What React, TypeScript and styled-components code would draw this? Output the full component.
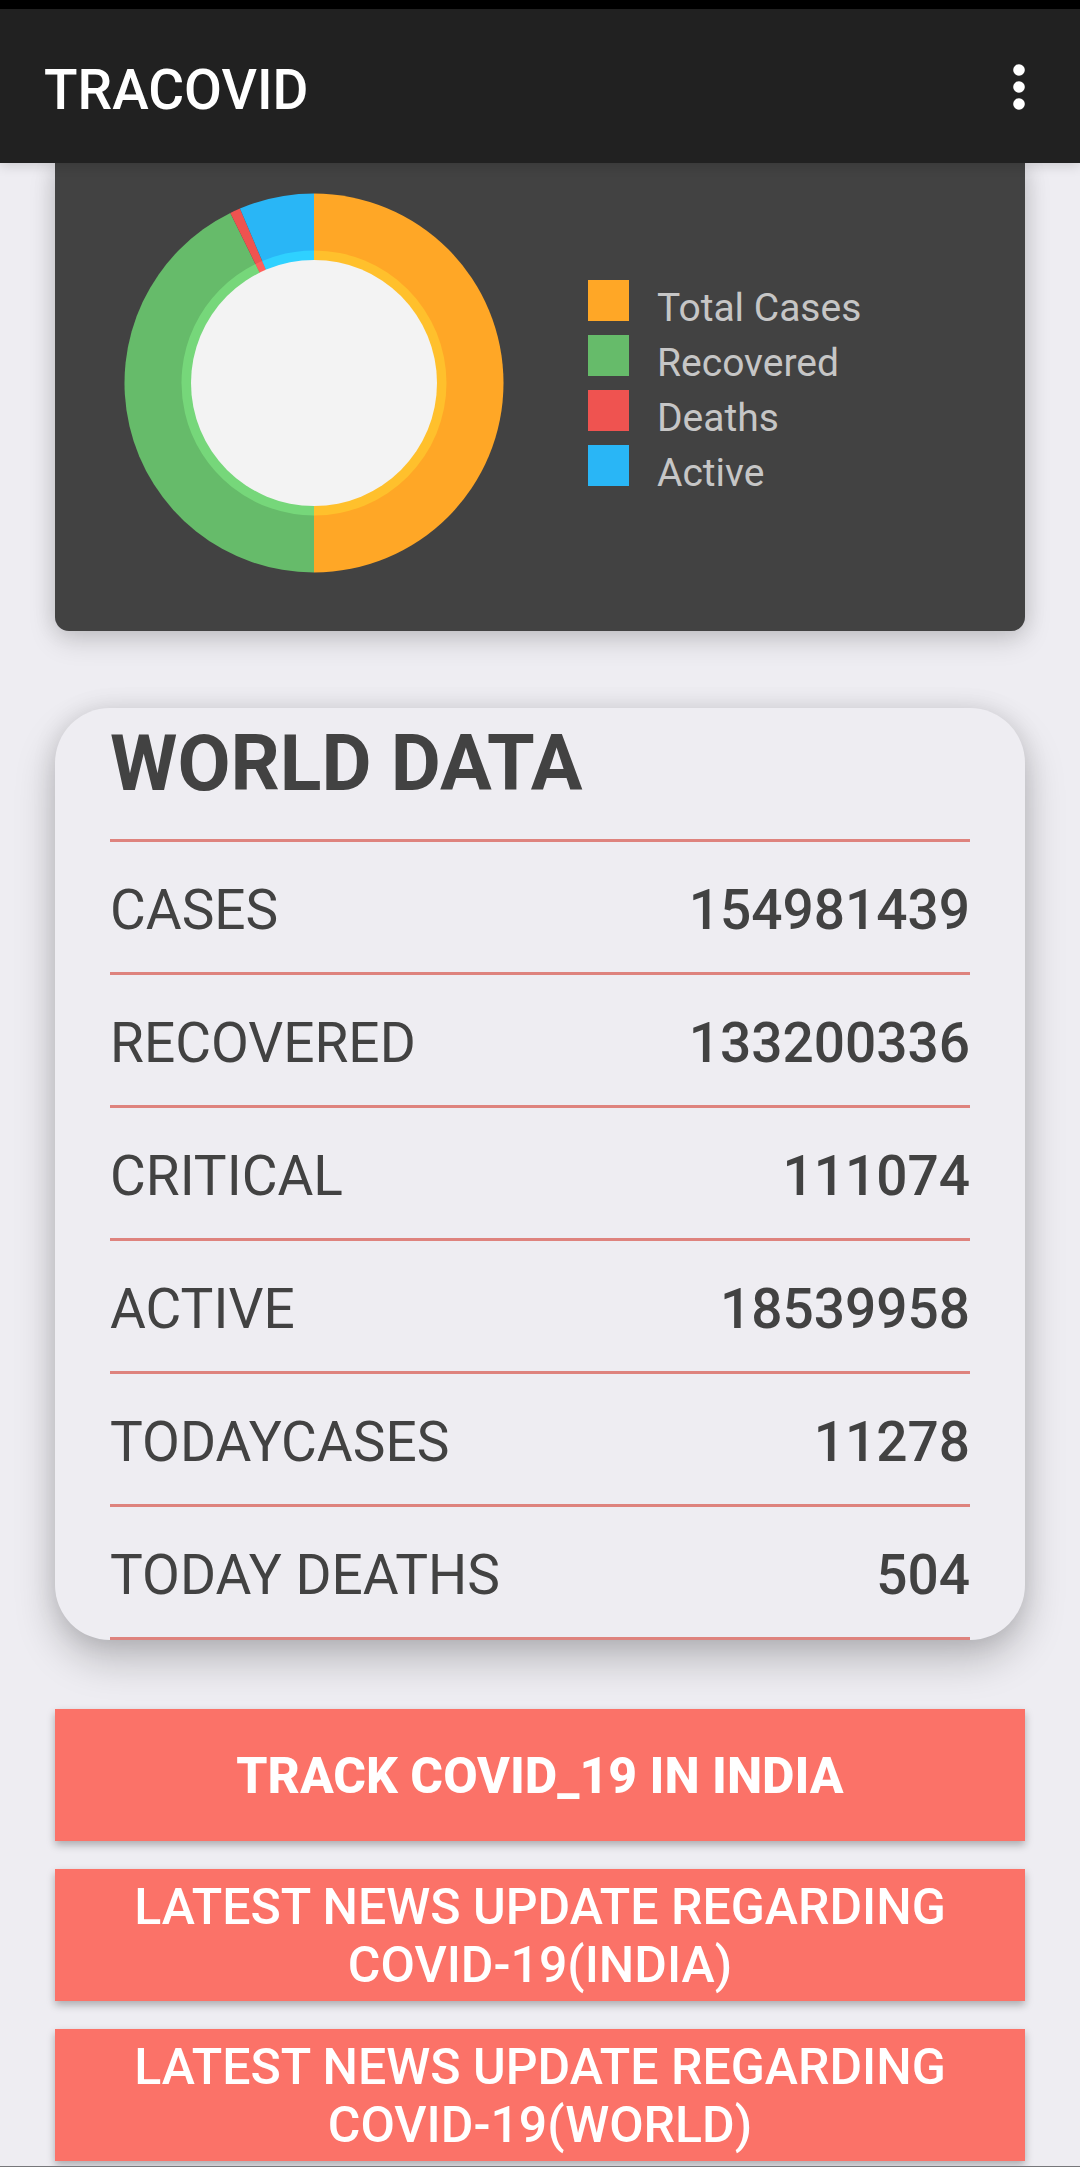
import React from "react";
import styled, { createGlobalStyle } from "styled-components";

const color = {
  page: "#eeedf2",
  bar: "#212121",
  panel: "#424242",
  ink: "#424242",
  accent: "#fb7268",
  rule: "#de837e",
  legend: "#c6c6c6",
};

const GlobalStyle = createGlobalStyle`
  *, *::before, *::after { box-sizing: border-box; }
  body {
    margin: 0;
    background: ${color.page};
    color: ${color.ink};
    font-family: Roboto, "Liberation Sans", sans-serif;
  }
`;

const Page = styled.div`
  display: flex;
  flex-direction: column;
  min-height: 100vh;
  padding-bottom: 5px;
  border-bottom: 1px solid #77777b;
  overflow: hidden;
`;

const StatusStrip = styled.div`
  height: 9px;
  background: #000;
`;

const AppBar = styled.header`
  position: relative;
  z-index: 1;
  display: flex;
  align-items: flex-end;
  justify-content: space-between;
  height: 154px;
  padding: 0 27px 41px 44px;
  background: ${color.bar};
  box-shadow: 0 2px 12px rgba(0, 0, 0, 0.16);
`;

const AppTitle = styled.h1`
  margin: 0;
  font-size: 55px;
  line-height: 64px;
  font-weight: 500;
  color: #fff;
`;

const MenuButton = styled.button`
  display: flex;
  align-items: center;
  justify-content: center;
  width: 68px;
  height: 70px;
  padding: 0;
  border: 0;
  background: none;
  color: #fff;
`;

const Content = styled.main`
  display: flex;
  flex-direction: column;
  padding: 0 55px;
`;

const ChartCard = styled.section`
  display: flex;
  align-items: center;
  gap: 84px;
  padding: 30px 69px 58px;
  border-radius: 0 0 14px 14px;
  background: ${color.panel};
  box-shadow: 0 10px 28px rgba(0, 0, 0, 0.14), 0 0 22px rgba(0, 0, 0, 0.12);
`;

const Donut = styled.svg`
  flex: none;
  width: 380px;
  height: 380px;
`;

const Legend = styled.ul`
  display: flex;
  flex-direction: column;
  gap: 14px;
  margin: 0;
  padding: 0;
  list-style: none;
`;

const LegendItem = styled.li`
  display: flex;
  gap: 28px;
  height: 41px;
  overflow: hidden;
  font-size: 39px;
  line-height: 57px;
  color: ${color.legend};
`;

const Swatch = styled.span<{ $fill: string }>`
  width: 41px;
  height: 41px;
  background: ${(p) => p.$fill};
`;

const DataCard = styled.section`
  margin-top: 77px;
  padding: 0 55px;
  border-radius: 55px;
  background: ${color.page};
  box-shadow: 0 20px 40px rgba(0, 0, 0, 0.22), 0 0 24px rgba(0, 0, 0, 0.1);
`;

const DataTitle = styled.h2`
  margin: 0;
  padding: 11px 0 30px;
  border-bottom: 3px solid ${color.rule};
  font-size: 77px;
  line-height: 90px;
  font-weight: 700;
`;

const DataTable = styled.table`
  width: 100%;
  border-spacing: 0;
  font-size: 55px;
  line-height: 64px;
`;

const Label = styled.th`
  padding: 36px 0 30px;
  border-bottom: 3px solid ${color.rule};
  font-weight: 400;
  text-align: left;
`;

const Value = styled.td`
  padding: 36px 0 30px;
  border-bottom: 3px solid ${color.rule};
  font-weight: 500;
  text-align: right;
`;

const Actions = styled.nav`
  display: flex;
  flex-direction: column;
  gap: 28px;
  margin-top: 69px;
`;

const ActionButton = styled.button<{ $strong?: boolean }>`
  height: 132px;
  padding: 2px 44px 0;
  border: 0;
  background: ${color.accent};
  box-shadow: 0 4px 8px rgba(0, 0, 0, 0.28);
  color: #fff;
  font-family: inherit;
  font-size: 50px;
  line-height: 58px;
  font-weight: ${(p) => (p.$strong ? 800 : 500)};
  text-transform: uppercase;
`;

// Slice angles are in degrees, clockwise from twelve o'clock.
const slices = [
  { name: "Total Cases", fill: "#ffa726", glow: "#ffc02c", from: 0, to: 180 },
  { name: "Recovered", fill: "#66bb6a", glow: "#76d77a", from: 180, to: 333.8 },
  { name: "Deaths", fill: "#ef5350", glow: "#ff605c", from: 333.8, to: 337 },
  { name: "Active", fill: "#29b6f6", glow: "#2fd1ff", from: 337, to: 360 },
];

const stats = [
  ["CASES", "154981439"],
  ["RECOVERED", "133200336"],
  ["CRITICAL", "111074"],
  ["ACTIVE", "18539958"],
  ["TODAYCASES", "11278"],
  ["TODAY DEATHS", "504"],
];

function wedge(radius: number, from: number, to: number) {
  const point = (deg: number) => {
    const a = (deg * Math.PI) / 180;
    return `${190 + radius * Math.sin(a)} ${190 - radius * Math.cos(a)}`;
  };
  return `M190 190L${point(from)}A${radius} ${radius} 0 0 1 ${point(to)}Z`;
}

function CasesChart() {
  return (
    <ChartCard aria-label="Cases chart">
      <Donut viewBox="0 0 380 380" role="img" aria-label="Share of cases">
        {slices.map((s) => (
          <path key={s.name} d={wedge(189.5, s.from, s.to)} fill={s.fill} />
        ))}
        {slices.map((s) => (
          <path key={s.name} d={wedge(132.5, s.from, s.to)} fill={s.glow} />
        ))}
        <circle cx="190" cy="190" r="123" fill="#f3f3f3" />
      </Donut>
      <Legend>
        {slices.map((s) => (
          <LegendItem key={s.name}>
            <Swatch $fill={s.fill} />
            {s.name}
          </LegendItem>
        ))}
      </Legend>
    </ChartCard>
  );
}

function WorldData() {
  return (
    <DataCard>
      <DataTitle id="world-data">WORLD DATA</DataTitle>
      <DataTable aria-labelledby="world-data">
        <tbody>
          {stats.map(([label, value]) => (
            <tr key={label}>
              <Label scope="row">{label}</Label>
              <Value>{value}</Value>
            </tr>
          ))}
        </tbody>
      </DataTable>
    </DataCard>
  );
}

export default function App() {
  return (
    <Page>
      <GlobalStyle />
      <StatusStrip />
      <AppBar>
        <AppTitle>TRACOVID</AppTitle>
        <MenuButton type="button" aria-label="More options">
          <svg width="12" height="46" viewBox="0 0 12 46" fill="currentColor">
            <circle cx="6" cy="6" r="5.8" />
            <circle cx="6" cy="23" r="5.8" />
            <circle cx="6" cy="40" r="5.8" />
          </svg>
        </MenuButton>
      </AppBar>
      <Content>
        <CasesChart />
        <WorldData />
        <Actions>
          <ActionButton type="button" $strong>
            Track Covid_19 in India
          </ActionButton>
          <ActionButton type="button">
            Latest news update regarding Covid-19(India)
          </ActionButton>
          <ActionButton type="button">
            Latest news update regarding Covid-19(World)
          </ActionButton>
        </Actions>
      </Content>
    </Page>
  );
}
